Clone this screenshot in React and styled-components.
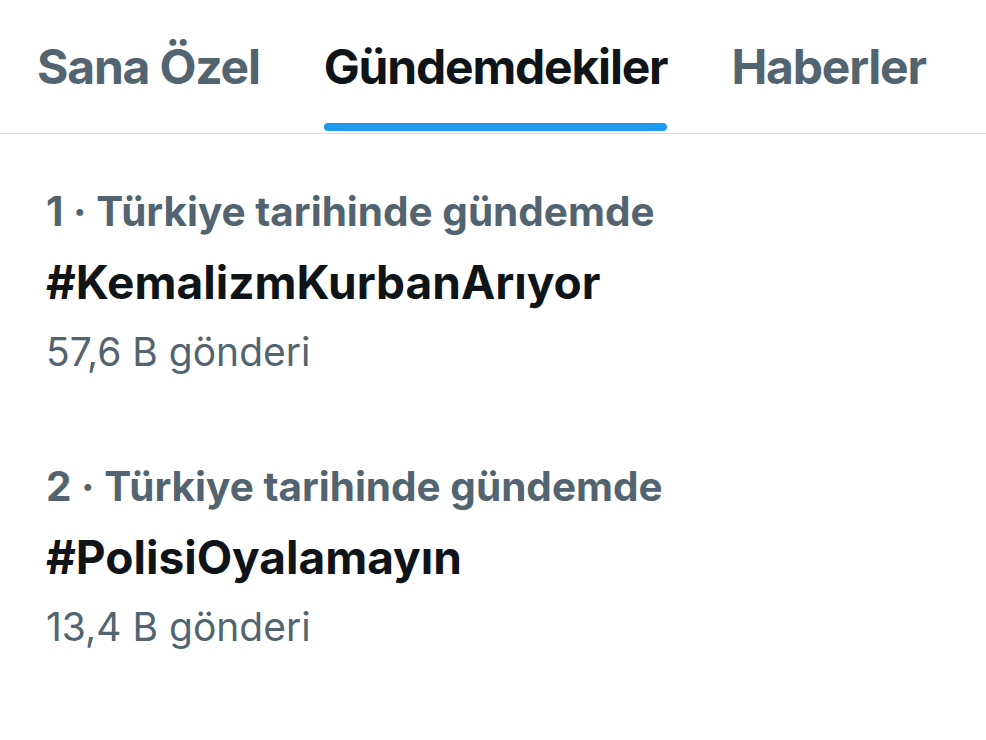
import React from 'react'
import styled, { createGlobalStyle } from 'styled-components'

const GlobalStyle = createGlobalStyle`
    body {
        margin: 0;
        background: #fff;
        font-family: Inter, "Liberation Sans", sans-serif;
    }
`

const TabBar = styled.nav`
    display: flex;
    gap: 64px;
    padding-left: 37px;
    height: 133px;
    border-bottom: 1px solid #d6dee2;
`

const Tab = styled.div`
    display: flex;
    flex-direction: column;
    align-items: stretch;
    padding-top: 43px;
    font-size: 48px;
    line-height: 48px;
    font-weight: 700;
    letter-spacing: -1.2px;
    color: ${props => (props.active ? '#0f1419' : '#536471')};
`

const Indicator = styled.div`
    margin-top: 32px;
    height: 8px;
    border-radius: 4px;
    background: #1d9bf0;
`

const List = styled.div`
    display: flex;
    flex-direction: column;
    gap: 65px;
    padding: 43px 0 0 46px;
`

const Trend = styled.div`
    display: flex;
    flex-direction: column;
`

const Meta = styled.div`
    font-size: 40.5px;
    line-height: 70px;
    font-weight: 700;
    color: #536471;
`

const Hashtag = styled.div`
    font-size: 46px;
    line-height: 70px;
    font-weight: 700;
    letter-spacing: 0px;
    color: #0f1419;
`

const Count = styled.div`
    font-size: 39px;
    line-height: 70px;
    font-weight: 400;
    color: #536471;
`

const tabs = ['Sana Özel', 'Gündemdekiler', 'Haberler']

const trends = [
    { rank: 1, tag: '#KemalizmKurbanArıyor', posts: '57,6 B gönderi' },
    { rank: 2, tag: '#PolisiOyalamayın', posts: '13,4 B gönderi' }
]

export default function App() {
    return (
        <>
            <GlobalStyle />
            <TabBar>
                {tabs.map(t => (
                    <Tab key={t} active={t === 'Gündemdekiler'}>
                        <span>{t}</span>
                        {t === 'Gündemdekiler' && <Indicator />}
                    </Tab>
                ))}
            </TabBar>
            <List>
                {trends.map(trend => (
                    <Trend key={trend.rank}>
                        <Meta>{trend.rank} · Türkiye tarihinde gündemde</Meta>
                        <Hashtag>{trend.tag}</Hashtag>
                        <Count>{trend.posts}</Count>
                    </Trend>
                ))}
            </List>
        </>
    )
}
